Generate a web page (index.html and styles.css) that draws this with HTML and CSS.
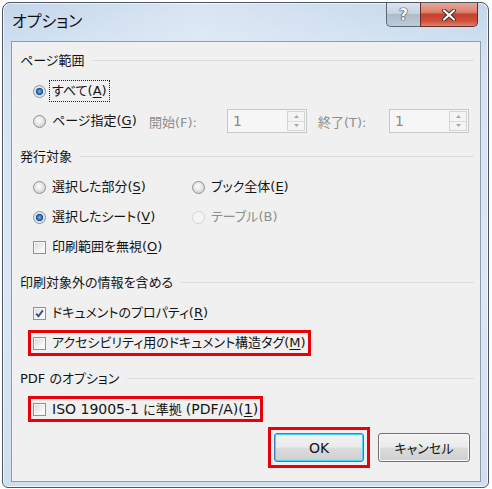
FILE: index.html
```html
<!DOCTYPE html>
<html lang="ja">
<head>
<meta charset="utf-8">
<title>オプション</title>
<link rel="stylesheet" href="styles.css">
</head>
<body>
<div class="window">
  <div class="titlebar">
    <span class="title">オプション</span>
    <div class="caption-btns">
      <span class="cbtn help">?</span>
      <span class="cbtn close">
        <svg width="16" height="12" viewBox="0 0 16 12"><path d="M3 1.5 L13 10.5 M13 1.5 L3 10.5" stroke="#3c2a28" stroke-width="4" stroke-linecap="round"/><path d="M3 1.5 L13 10.5 M13 1.5 L3 10.5" stroke="#ffffff" stroke-width="2.2" stroke-linecap="round"/></svg>
      </span>
    </div>
  </div>
  <div class="panel">
    <div class="group first">
      <div class="heading"><span>ページ範囲</span><i class="rule"></i></div>
      <div class="row"><span class="radio on"></span><span class="lbl focus">すべて(<u>A</u>)</span></div>
      <div class="row">
        <span class="radio"></span><span class="lbl pg">ページ指定(<u>G</u>)</span>
        <span class="dim from">開始(F):</span>
        <span class="spin"><span class="val">1</span><span class="arrows"><span class="up"><svg width="5" height="3" viewBox="0 0 5 3"><path d="M0 3 L2.5 0 L5 3Z" fill="#a8a8a8"/></svg></span><span class="down"><svg width="5" height="3" viewBox="0 0 5 3"><path d="M0 0 L2.5 3 L5 0Z" fill="#a8a8a8"/></svg></span></span></span>
        <span class="dim to">終了(T):</span>
        <span class="spin"><span class="val">1</span><span class="arrows"><span class="up"><svg width="5" height="3" viewBox="0 0 5 3"><path d="M0 3 L2.5 0 L5 3Z" fill="#a8a8a8"/></svg></span><span class="down"><svg width="5" height="3" viewBox="0 0 5 3"><path d="M0 0 L2.5 3 L5 0Z" fill="#a8a8a8"/></svg></span></span></span>
      </div>
    </div>
    <div class="group">
      <div class="heading"><span>発行対象</span><i class="rule"></i></div>
      <div class="grid">
        <div class="row"><span class="radio"></span><span class="lbl">選択した部分(<u>S</u>)</span></div>
        <div class="row col2"><span class="radio"></span><span class="lbl">ブック全体(<u>E</u>)</span></div>
        <div class="row"><span class="radio on"></span><span class="lbl">選択したシート(<u>V</u>)</span></div>
        <div class="row col2"><span class="radio off"></span><span class="lbl dim">テーブル(B)</span></div>
        <div class="row"><span class="check"></span><span class="lbl">印刷範囲を無視(<u>O</u>)</span></div>
      </div>
    </div>
    <div class="group">
      <div class="heading"><span>印刷対象外の情報を含める</span><i class="rule"></i></div>
      <div class="row"><span class="check on"><svg width="11" height="11" viewBox="0 0 11 11"><path d="M2.2 5.6 L4.5 8.2 L8.8 2.4" fill="none" stroke="#3a4f8a" stroke-width="1.9"/></svg></span><span class="lbl">ドキュメントのプロパティ(<u>R</u>)</span></div>
      <div class="row"><span class="mark"><span class="check"></span><span class="lbl">アクセシビリティ用のドキュメント構造タグ(<u>M</u>)</span></span></div>
    </div>
    <div class="group">
      <div class="heading"><span><span class="en">PDF</span> のオプション</span><i class="rule"></i></div>
      <div class="row"><span class="mark"><span class="check"></span><span class="lbl"><span class="en">ISO 19005-1</span> に準拠 <span class="en">(PDF/A)(<u>1</u>)</span></span></span></div>
    </div>
    <div class="buttons">
      <span class="btn-mark"><span class="btn default">OK</span></span>
      <span class="btn cancel">キャンセル</span>
    </div>
  </div>
</div>
</body>
</html>
```

FILE: styles.css
```css
html, body {
  margin: 0;
  padding: 0;
  background: #ffffff;
}
body {
  font-family: "DejaVu Sans", "Noto Sans CJK JP", sans-serif;
  font-feature-settings: "palt";
  color: #141414;
  font-size: 13px;
}
.en {
  font-size: 14px;
}
.window {
  box-sizing: border-box;
  width: 487px;
  height: 486px;
  margin: 2px 0 0 2px;
  border: 1px solid #4d5560;
  border-radius: 8px 8px 6px 6px;
  background: linear-gradient(180deg, #c3d6eb 0%, #d4e3f3 12%, #dbe7f4 60%, #cfdff0 100%);
  box-shadow: inset 0 0 0 1px rgba(255,255,255,0.7);
  display: flex;
  flex-direction: column;
}
.titlebar {
  height: 38px;
  display: flex;
  justify-content: space-between;
  align-items: flex-start;
  padding: 0 10px 0 9px;
  background: linear-gradient(90deg, rgba(255,255,255,0) 0%, rgba(255,255,255,0.35) 40%, rgba(255,255,255,0) 100%);
}
.title {
  font-family: "Noto Sans CJK JP", sans-serif;
  font-size: 16px;
  line-height: 24px;
  padding-top: 5px;
  color: #111;
}
.caption-btns {
  display: flex;
  height: 24px;
}
.cbtn {
  box-sizing: border-box;
  height: 24px;
  display: flex;
  align-items: center;
  justify-content: center;
  border: 1px solid #5a6777;
  border-top: none;
}
.help {
  width: 34px;
  border-radius: 0 0 0 5px;
  border-right: none;
  background: linear-gradient(180deg, #dbe5ef 0%, #c6d3e0 45%, #aebdcc 50%, #bdcad8 100%);
  color: #f8f8f8;
  font-weight: bold;
  font-size: 15px;
  text-shadow: 0 0 1px #2c3440, 0 0 1px #2c3440, 0 0 1px #2c3440;
}
.close {
  width: 58px;
  border-radius: 0 0 5px 0;
  border-color: #6a2b24;
  background: linear-gradient(180deg, #e8a797 0%, #d9816f 40%, #c4402c 50%, #d2523d 80%, #e0836c 100%);
}
.panel {
  flex: 1;
  margin: 0 7px 5px 8px;
  border: 1px solid #8f9cab;
  background: #f0f0f0;
  padding: 7px 6px 0 8px;
}
.group {
  margin-top: 9px;
}
.group.first {
  margin-top: 0;
}
.heading {
  height: 20px;
  display: flex;
  align-items: center;
  margin-bottom: 7px;
}
.heading .en {
  font-size: 13px;
}
.rule {
  flex: 1;
  height: 1px;
  background: #d8dde2;
  margin: 2px 0 0 8px;
}
.row {
  height: 30px;
  display: flex;
  align-items: center;
  padding-left: 13px;
}
.grid {
  display: grid;
  grid-template-columns: 172px auto;
}
.grid .col2 {
  padding-left: 0;
}
.lbl {
  margin-left: 6px;
  white-space: nowrap;
  line-height: 18px;
}
.lbl u {
  text-decoration-thickness: 1px;
  text-underline-offset: 2px;
}
.focus {
  outline: 1px dotted #222;
  outline-offset: 0;
  padding: 1px 2px 1px 2px;
  margin-left: 4px;
}
.dim {
  color: #8e8e8e;
}
.pg {
  width: 97px;
}
.from {
  width: 78px;
}
.to {
  width: 71px;
  margin-left: 11px;
}
.spin {
  box-sizing: border-box;
  width: 80px;
  height: 24px;
  border: 1px solid #c6c9cc;
  background: #f6f6f6;
  display: flex;
  align-items: stretch;
  padding: 1px;
}
.val {
  flex: 1;
  color: #8a8a8a;
  font-size: 14px;
  line-height: 21px;
  padding-left: 4px;
}
.arrows {
  box-sizing: border-box;
  width: 18px;
  border: 1px solid #d5d5d5;
  display: flex;
  flex-direction: column;
  background: #f4f4f4;
}
.arrows span {
  flex: 1;
  display: flex;
  align-items: center;
  justify-content: center;
}
.arrows .up {
  border-bottom: 1px solid #dcdcdc;
}
.radio {
  box-sizing: border-box;
  width: 13px;
  height: 13px;
  border-radius: 50%;
  border: 1px solid #8e9196;
  background: radial-gradient(circle at 45% 40%, #fcfcfc 0, #eeeeee 3px, #d6d6d6 6px);
  flex: none;
}
.radio.on {
  background: radial-gradient(circle at 50% 50%, #7db8e6 0, #2a68a8 2.5px, #1e4f86 3.3px, #cfdfee 4px, #f2f2f2 6px);
}
.radio.off {
  border-color: #cfd2d5;
  background: #f4f4f4;
}
.check {
  box-sizing: border-box;
  width: 13px;
  height: 13px;
  border: 1px solid #8e9196;
  background: linear-gradient(135deg, #d7d7d7 0%, #f3f3f3 60%, #ffffff 100%);
  box-shadow: inset 0 0 0 1px #f6f6f6;
  flex: none;
  display: flex;
  align-items: center;
  justify-content: center;
}
.check svg {
  display: block;
}
.mark {
  display: flex;
  align-items: center;
  height: 16px;
  outline: 3px solid #e8000b;
  outline-offset: 2px;
}
.buttons {
  display: flex;
  justify-content: flex-end;
  gap: 14px;
  margin-top: 9px;
  padding-right: 4px;
}
.btn-mark {
  display: flex;
  outline: 3px solid #e8000b;
  outline-offset: 3px;
}
.btn {
  box-sizing: border-box;
  width: 90px;
  height: 29px;
  border: 1px solid #707070;
  border-radius: 3px;
  background: linear-gradient(180deg, #f3f3f3 0%, #ebebeb 49%, #dcdcdc 51%, #cfcfcf 100%);
  box-shadow: inset 0 0 0 1px #fbfbfb;
  display: flex;
  align-items: center;
  justify-content: center;
  font-size: 14px;
}
.btn.cancel {
  width: 92px;
  font-size: 13px;
}
.btn.default {
  border-color: #3c7fb1;
  box-shadow: inset 0 0 0 1px #48d5ff;
}
```
